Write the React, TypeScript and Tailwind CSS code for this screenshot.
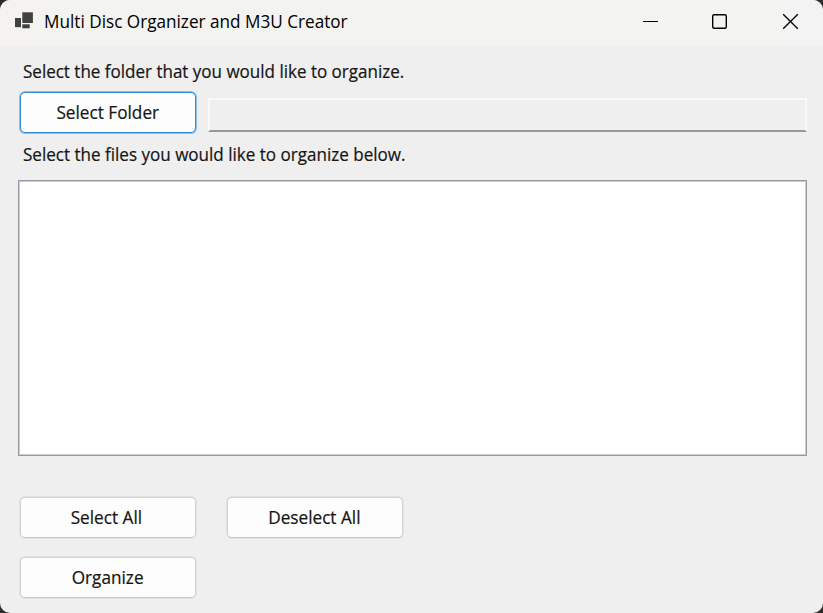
import React from "react";

function AppIcon() {
  return (
    <svg width="20" height="18" viewBox="0 0 20 18" fill="#414141" className="ml-[14px] shrink-0">
      <rect x="1" y="6" width="6" height="9.2" />
      <rect x="8.3" y="0.3" width="10.6" height="10.7" />
      <rect x="8.3" y="12.3" width="7.4" height="4" />
    </svg>
  );
}

function WindowControls() {
  return (
    <div className="ml-auto flex h-[46px] shrink-0">
      <button className="flex w-[69px] items-center justify-center" aria-label="Minimize">
        <svg width="69" height="46" shapeRendering="crispEdges">
          <path d="M27 21.5h15" stroke="#000" fill="none" />
        </svg>
      </button>
      <button className="flex w-[69px] items-center justify-center" aria-label="Maximize">
        <svg width="69" height="46">
          <rect x="27.7" y="14.7" width="13.6" height="13.6" rx="1.5" stroke="#000" strokeWidth="1.4" fill="none" />
        </svg>
      </button>
      <button className="flex w-[69px] items-center justify-center" aria-label="Close">
        <svg width="69" height="46">
          <path d="M29.2 14.2l14.6 14.6M43.8 14.2L29.2 28.8" stroke="#000" strokeWidth="1.35" fill="none" />
        </svg>
      </button>
    </div>
  );
}

function Button({ label, focused = false, spacing = "" }: { label: string; focused?: boolean; spacing?: string }) {
  const frame = focused
    ? "border-[#2f8cd6] shadow-[0_0_0_1px_#8fc0e8]"
    : "border-[#d2d2d2] border-b-[#c6c6c6] shadow-[0_0_0_1px_#e3e3e3]";
  return (
    <button className={`flex h-[41px] w-[176px] items-center justify-center rounded-[5px] border bg-[#fdfdfd] pb-px ${frame} ${spacing}`}>
      <span className="inline-block scale-x-[0.955] whitespace-nowrap [-webkit-text-stroke:0.2px_#151515]">{label}</span>
    </button>
  );
}

export default function App() {
  return (
    <div className="h-[613px] w-[823px] overflow-hidden bg-[#2e2c2a]">
      <div className="flex h-[613px] w-[823px] flex-col overflow-hidden rounded-[10px] bg-[#efefef] font-['Open_Sans','Noto_Sans',sans-serif] text-[18px] leading-6 text-[#151515]">
        <header className="flex h-[46px] shrink-0 items-center bg-linear-to-r from-[#f4f3ef] to-[#f3f3f3]">
          <div className="flex h-[46px] items-start pt-[12px]">
            <AppIcon />
          </div>
          <h1 className="ml-[10px] origin-left scale-x-[0.953] whitespace-nowrap pb-[4px] text-black">Multi Disc Organizer and M3U Creator</h1>
          <WindowControls />
        </header>
        <main className="flex flex-col">
          <p className="ml-[22.5px] mt-[13px] w-max origin-left scale-x-[0.945] [-webkit-text-stroke:0.2px_#151515]">Select the folder that you would like to organize.</p>
          <div className="ml-[20px] mt-[9px] flex h-[42px] items-start">
            <Button label="Select Folder" focused />
            <div className="ml-[12px] mt-[6px] h-[34px] w-[599px] border-2 border-[#f9f9f9] border-b-[#999]" />
          </div>
          <p className="ml-[22.5px] mt-[8px] w-max origin-left scale-x-[0.947] [-webkit-text-stroke:0.2px_#151515]">Select the files you would like to organize below.</p>
          <div className="ml-[18px] mt-[14px] h-[276px] w-[789px] border border-[#969ba3] bg-white shadow-[inset_0_0_0_1px_#c9ccd0]" />
          <div className="ml-[20px] mt-[41px] flex gap-[31px]">
            <Button label="Select All" spacing="pr-[3px]" />
            <Button label="Deselect All" spacing="pr-[2px]" />
          </div>
          <div className="ml-[20px] mt-[19px] flex">
            <Button label="Organize" />
          </div>
        </main>
      </div>
    </div>
  );
}
